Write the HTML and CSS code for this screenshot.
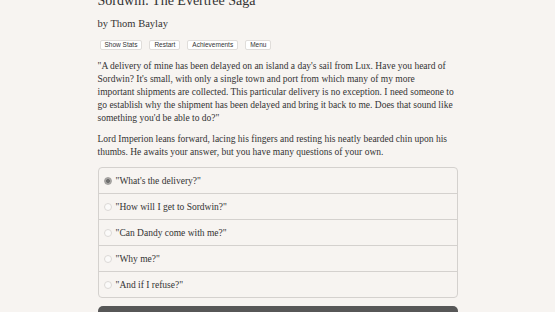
FILE: index.html
```html
<!DOCTYPE html>
<html>
<head>
<meta charset="utf-8">
<link rel="stylesheet" href="styles.css">
</head>
<body>
<div class="page">
  <h1 class="title">Sordwin: The Evertree Saga</h1>
  <h2 class="author">by Thom Baylay</h2>
  <div class="buttons">
    <button class="btn">Show Stats</button>
    <button class="btn">Restart</button>
    <button class="btn">Achievements</button>
    <button class="btn">Menu</button>
  </div>
  <p class="text">"A delivery of mine has been delayed on an island a day's sail from Lux. Have you heard of Sordwin? It's small, with only a single town and port from which many of my more<br>important shipments are collected. This particular delivery is no exception. I need someone to<br>go establish why the shipment has been delayed and bring it back to me. Does that sound like<br>something you'd be able to do?"</p>
  <p class="text">Lord Imperion leans forward, lacing his fingers and resting his neatly bearded chin upon his thumbs. He awaits your answer, but you have many questions of your own.</p>
  <div class="choices">
    <label class="choice"><span class="radio checked"></span>"What's the delivery?"</label>
    <label class="choice"><span class="radio"></span>"How will I get to Sordwin?"</label>
    <label class="choice"><span class="radio"></span>"Can Dandy come with me?"</label>
    <label class="choice"><span class="radio"></span>"Why me?"</label>
    <label class="choice"><span class="radio"></span>"And if I refuse?"</label>
  </div>
  <div class="next"></div>
</div>
</body>
</html>
```
FILE: styles.css
```css
html, body {
  margin: 0;
  padding: 0;
  background: #f7f4f1;
  overflow: hidden;
}
.page {
  width: 360px;
  margin: 0 auto;
  font-family: "Liberation Serif", serif;
  color: #333;
}
.title {
  font-size: 14px;
  line-height: 14px;
  font-weight: normal;
  margin: -6px 0 0 0;
}
.author {
  font-size: 10.5px;
  line-height: 13px;
  font-weight: normal;
  margin: 9px 0 0 0;
}
.buttons {
  display: flex;
  gap: 7px;
  margin: 10px 0 0 2px;
}
.btn {
  font-family: "Liberation Sans", sans-serif;
  font-size: 6.5px;
  line-height: 8px;
  height: 10px;
  padding: 0 4px;
  background: #fff;
  border: 1px solid #e0ddda;
  border-radius: 2px;
  color: #333;
}
.text {
  font-size: 9.5px;
  line-height: 13px;
  margin: 10px 0 0 0;
}
.text + .text {
  margin-top: 8px;
}
.choices {
  margin-top: 8px;
  border: 1px solid #d4d1ce;
  border-radius: 4px;
  display: flex;
  flex-direction: column;
}
.choice {
  height: 25px;
  display: flex;
  align-items: center;
  gap: 4px;
  padding-left: 5px;
  font-size: 9.5px;
  border-top: 1px solid #d4d1ce;
}
.choice:first-child {
  border-top: none;
}
.radio {
  width: 6px;
  height: 6px;
  border-radius: 50%;
  border: 1px solid #dcd9d6;
  background: #fbfaf9;
  box-sizing: content-box;
}
.radio.checked {
  border-color: #a3a19f;
  background: radial-gradient(circle, #6f6f6f 0 1.8px, #a8a6a4 2.2px);
}
.next {
  margin-top: 8px;
  height: 30px;
  background: #575757;
  border-radius: 5px 5px 0 0;
}
```
